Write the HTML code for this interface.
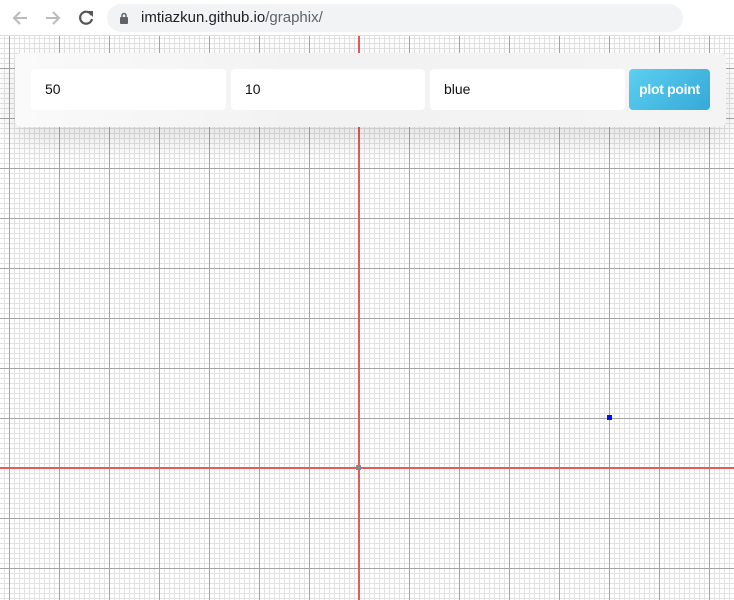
<!DOCTYPE html>
<html><head><style>
html,body{margin:0;padding:0;width:734px;height:600px;overflow:hidden;background:#fff;font-family:"Liberation Sans",sans-serif}
#bar{position:absolute;left:0;top:0;width:734px;height:36px;background:#fff;border-bottom:1px solid #ddd;box-sizing:border-box}
#url{position:absolute;left:107px;top:4px;width:576px;height:28px;border-radius:14px;background:#f1f3f4;font-size:15px;line-height:28px;color:#202124}
#url span.g{color:#5f6368}
#grid{position:absolute;left:0;top:36px;width:734px;height:564px;
background:
linear-gradient(#e65a5a,#e65a5a) 0 431px/734px 2px no-repeat,
linear-gradient(#e65a5a,#e65a5a) 358px 0/2px 564px no-repeat,
linear-gradient(90deg,#a4a4a4 1px,transparent 1px) 9px 0/50px 50px,
linear-gradient(#a4a4a4 1px,transparent 1px) 0 32px/50px 50px,
linear-gradient(90deg,#e2e2e2 1px,transparent 1px) 4px 0/5px 5px,
linear-gradient(#e2e2e2 1px,transparent 1px) 0 2px/5px 5px;}
#panel{position:absolute;left:15px;top:53px;width:711px;height:74px;border-radius:6px;background:linear-gradient(90deg,#fafafa,#f2f2f2 40%,#f4f4f4);box-shadow:0 12px 30px rgba(0,0,0,0.12)}
.in{position:absolute;top:16px;height:41px;background:#fff;border-radius:4px;font-size:14px;line-height:41px;padding-left:14px;box-sizing:border-box;color:#111}
#btn{position:absolute;left:614px;top:16px;width:81px;height:41px;border-radius:4px;background:linear-gradient(135deg,#5bd0f0,#36a8d8);color:#fff;font-weight:bold;font-size:14px;text-align:center;line-height:41px;letter-spacing:-0.3px}
</style></head><body>
<div id="grid"></div>
<div style="position:absolute;left:356px;top:465px;width:5px;height:5px;background:#888"></div>
<div style="position:absolute;left:607px;top:415px;width:5px;height:5px;background:#0010ff"></div>
<div id="bar">
<svg style="position:absolute;left:10px;top:8px" width="20" height="20" viewBox="0 0 20 20"><path d="M17 10H4M10 4l-6 6 6 6" stroke="#bbb" stroke-width="2" fill="none"/></svg>
<svg style="position:absolute;left:43px;top:8px" width="20" height="20" viewBox="0 0 20 20"><path d="M3 10h13M10 4l6 6-6 6" stroke="#bbb" stroke-width="2" fill="none"/></svg>
<svg style="position:absolute;left:76px;top:8px" width="20" height="20" viewBox="0 0 20 20"><path d="M15.5 7A6 6 0 1 0 16 11" stroke="#555" stroke-width="2.2" fill="none"/><path d="M11 3h6v6z" fill="#555"/></svg>
<div id="url"><svg style="position:absolute;left:12px;top:8px" width="10" height="12" viewBox="0 0 10 12"><rect x="1" y="5" width="8" height="7" rx="1" fill="#5f6368"/><path d="M3 5V3.5a2 2 0 0 1 4 0V5" stroke="#5f6368" stroke-width="1.5" fill="none"/></svg><span style="position:absolute;left:34px">imtiazkun.github.io<span class="g">/graphix/</span></span></div>
</div>
<div id="panel">
<div class="in" style="left:16px;width:195px">50</div>
<div class="in" style="left:216px;width:194px">10</div>
<div class="in" style="left:415px;width:195px">blue</div>
<div id="btn">plot point</div>
</div>
</body></html>
